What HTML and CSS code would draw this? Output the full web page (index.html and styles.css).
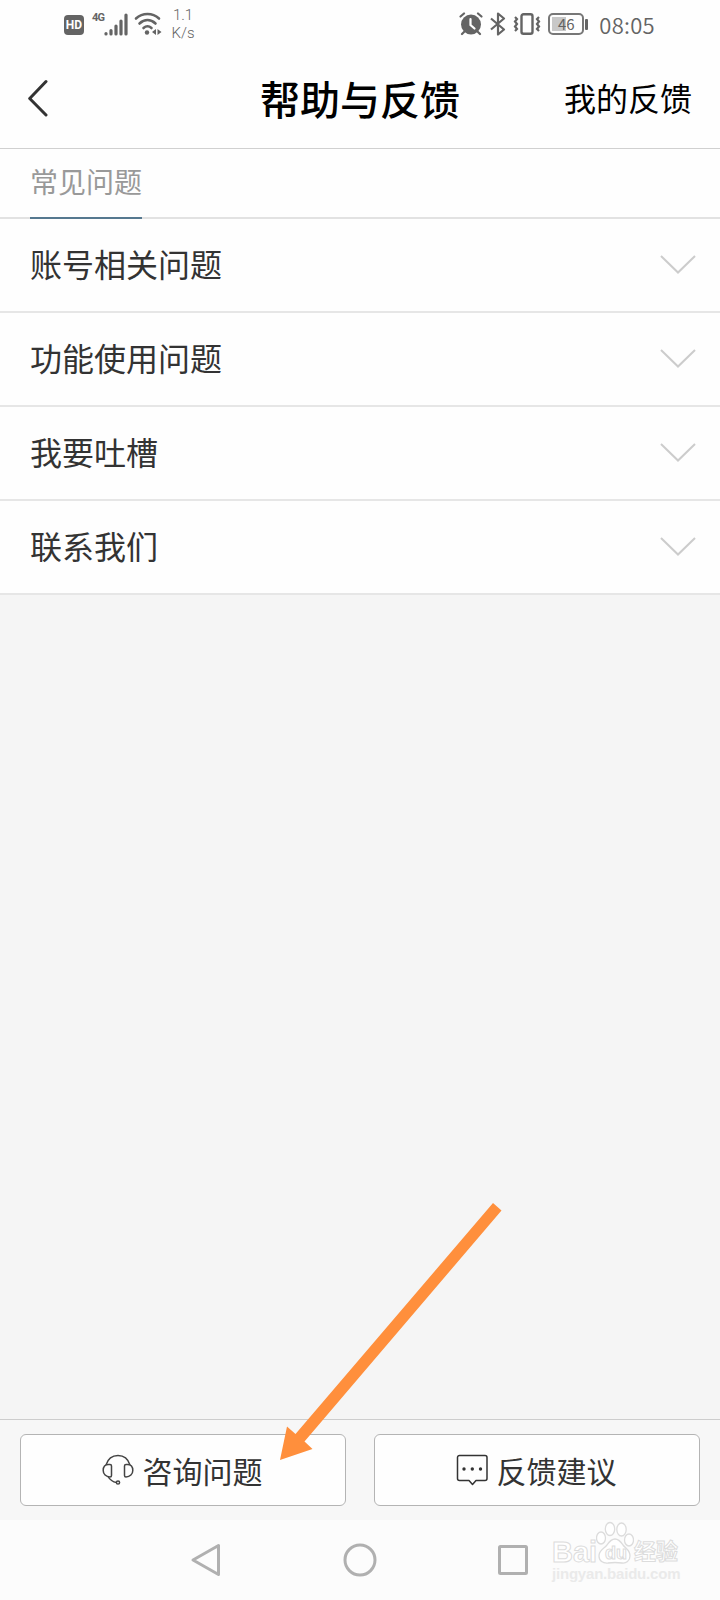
FILE: index.html
```html
<!DOCTYPE html>
<html lang="zh-CN">
<head>
  <meta charset="UTF-8">
  <title>帮助与反馈</title>
  <link rel="stylesheet" href="styles.css">
</head>
<body>
  <div class="status-bar">
    <div class="status-left">
      <span class="hd">HD</span>
      <span class="net">4G</span>
      <svg class="signal" width="24" height="24" viewBox="0 0 24 24" stroke="#646464" stroke-width="3.200" stroke-linecap="round">
        <path d="M2 20.5v.5M7 17.5v3.5M12 13v8M17 8v13M22 2v19"/>
      </svg>
      <svg class="wifi" width="28" height="24" viewBox="0 0 28 24" fill="none" stroke="#646464" stroke-width="2.6" stroke-linecap="round">
        <path d="M2 6.500C8.500 .5 18.500 .5 25 6.500M5.500 11.500c5-4.500 11-4.500 16 0M9.500 16c2.500-2.200 5.500-2.200 8 0"/>
        <circle cx="13" cy="20.500" r="2.200" fill="#646464" stroke="none"/>
        <path d="M22 17v6l-4-3zM23.500 17v6l4-3z" fill="#646464" stroke="none"/>
      </svg>
      <span class="speed">1.1<br>K/s</span>
    </div>
    <div class="status-right">
      <svg class="alarm" width="24" height="24" viewBox="0 0 24 24" fill="none" stroke="#646464" stroke-linecap="round">
        <circle cx="12" cy="12.500" r="10" fill="#646464" stroke="none"/>
        <path d="M1.500 4.500L5 1.500M22.500 4.500L19 1.500M5 20l-2 2M19 20l2 2" stroke-width="2.200"/>
        <path d="M11.500 7v6l4 3.500" stroke="#fff" stroke-width="2.200"/>
      </svg>
      <svg class="bluetooth" width="16" height="24" viewBox="0 0 16 24" fill="none" stroke="#646464" stroke-width="2.200" stroke-linejoin="round">
        <path d="M1 6.500l13 11-6 5v-21l6 5-13 11"/>
      </svg>
      <svg class="vibrate" width="28" height="24" viewBox="0 0 28 24" fill="none" stroke="#646464">
        <rect x="8.500" y="2.200" width="11" height="19.600" rx="2" stroke-width="2.400"/>
        <path d="M2 5l2 2-2 2.500 2 2.500-2 2.500 2 2.500-2 2M26 5l-2 2 2 2.500-2 2.500 2 2.500-2 2.500 2 2" stroke-width="2.200"/>
      </svg>
      <div class="battery"><span>46</span></div>
      <span class="time">08:05</span>
    </div>
  </div>

  <header class="header">
    <a class="back">
      <svg width="24" height="40" viewBox="0 0 24 40" fill="none" stroke="#333" stroke-width="3" stroke-linecap="round" stroke-linejoin="round">
        <path d="M18 3.500L1.700 20.500 18 37"/>
      </svg>
    </a>
    <h1>帮助与反馈</h1>
    <a class="my-feedback">我的反馈</a>
  </header>

  <nav class="tabs">
    <span class="tab">常见问题</span>
  </nav>

  <ul class="list">
    <li>
      <span>账号相关问题</span>
      <svg class="arrow" width="36" height="20" viewBox="0 0 36 20"><path d="M1 1l17 16.500L35 1"/></svg>
    </li>
    <li>
      <span>功能使用问题</span>
      <svg class="arrow" width="36" height="20" viewBox="0 0 36 20"><path d="M1 1l17 16.500L35 1"/></svg>
    </li>
    <li>
      <span>我要吐槽</span>
      <svg class="arrow" width="36" height="20" viewBox="0 0 36 20"><path d="M1 1l17 16.500L35 1"/></svg>
    </li>
    <li>
      <span>联系我们</span>
      <svg class="arrow" width="36" height="20" viewBox="0 0 36 20"><path d="M1 1l17 16.500L35 1"/></svg>
    </li>
  </ul>

  <div class="footer">
    <a class="btn">
      <svg width="32" height="32" viewBox="0 0 32 32" fill="none" stroke="#444" stroke-width="1.500">
        <path d="M4 11C6 4.500 10.500 1.500 16 1.500S26 4.500 28 11"/>
        <path d="M6.500 10.500H8a1.500 1.500 0 0 1 1.500 1.500v9.500c0 1-.5 1.500-1.500 1.500C4 23 1.200 20 1.200 16.500s2-6 5.300-6zM25.500 10.500H24a1.500 1.500 0 0 0-1.500 1.500v9.500c0 1 .5 1.500 1.500 1.500 4 0 6.800-3 6.800-6.500s-2-6-5.300-6z"/>
        <path d="M6 22.500c2 3.500 5 5.500 8.500 6"/>
        <circle cx="16" cy="28.500" r="1.600"/>
      </svg>
      <span>咨询问题</span>
    </a>
    <a class="btn">
      <svg width="32" height="32" viewBox="0 0 32 32" fill="none" stroke="#333" stroke-width="1.500">
        <path d="M3.500 1.500h25.500a2 2 0 0 1 2 2v21a2 2 0 0 1-2 2H20l-3.500 4-3.500-4H3.500a2 2 0 0 1-2-2v-21a2 2 0 0 1 2-2z" stroke-linejoin="round"/>
        <g fill="#333" stroke="none">
          <circle cx="8" cy="15" r="1.700"/>
          <circle cx="16.300" cy="15" r="1.700"/>
          <circle cx="24.500" cy="15" r="1.700"/>
        </g>
      </svg>
      <span>反馈建议</span>
    </a>
  </div>

  <div class="nav-bar">
    <svg width="32" height="34" viewBox="0 0 32 34"><path d="M28.500 2.500v29L3 17z"/></svg>
    <svg width="34" height="34" viewBox="0 0 34 34"><circle cx="17" cy="17" r="15"/></svg>
    <svg width="30" height="30" viewBox="0 0 30 30"><rect x="1.500" y="1.500" width="27" height="27" rx="1"/></svg>
  </div>

  <!-- arrow pointing at the first button -->
  <svg class="pointer" width="224" height="260" viewBox="0 0 224 260">
    <path d="M213 3L221.500 10.500 24.500 241.500 32.500 249 0 260 7 226.500 15.500 234z" fill="#ff8f3c"/>
  </svg>

  <div class="watermark">
    <div class="wm-top">
      <span class="wm-bai">Bai</span>
      <span class="wm-paw">
        <svg width="38" height="44" viewBox="0 0 38 44" fill="#fff" stroke="#dcdcdc" stroke-width="1.300">
          <ellipse cx="5" cy="17" rx="4.500" ry="6"/>
          <ellipse cx="14" cy="8" rx="4.700" ry="6.500"/>
          <ellipse cx="25.500" cy="8.500" rx="4.700" ry="6.500"/>
          <ellipse cx="33" cy="19" rx="4.500" ry="6"/>
          <path d="M19 18c4 0 6 3 8 6 3 4 7 5 7 11 0 5-4 7.500-8 7-5-.7-9-.7-14 0-5 .5-9-2-9-7 0-6 5-7 8-11 2-3 4-6 8-6z"/>
        </svg>
        <b>du</b>
      </span>
      <span class="wm-cn">经验</span>
    </div>
    <div class="wm-url">jingyan.baidu.com</div>
  </div>
</body>
</html>
```
FILE: styles.css
```css
* {
  box-sizing: border-box;
}

body {
  position: relative;
  display: flex;
  flex-direction: column;
  width: 720px;
  height: 1600px;
  margin: 0;
  overflow: hidden;
  background: #f5f5f5;
  color: #333;
  font-family: "Noto Sans CJK SC", sans-serif;
}

svg {
  display: block;
  flex: none;
}

/* status bar */
.status-bar {
  display: flex;
  justify-content: space-between;
  height: 48px;
  padding: 0 65px 0 64px;
  background: #fefefe;
  color: #646464;
}

.status-left,
.status-right {
  display: flex;
  align-items: center;
}

.hd {
  width: 20px;
  height: 20px;
  margin-top: 2px;
  border-radius: 4px;
  background: #646464;
  color: #fff;
  font: bold 12px/20px Roboto, sans-serif;
  text-align: center;
}

.net {
  width: 12px;
  margin: -13px 0 0 8px;
  font: bold 11px/12px "Roboto", sans-serif;
  letter-spacing: -0.8px;
}

.signal {
  margin-top: 1px;
}

.wifi {
  margin: 0 0 0 6px;
}

.speed {
  width: 24px;
  margin-left: 9px;
  font: 300 15px/18px Roboto, sans-serif;
  text-align: center;
  white-space: nowrap;
}

.bluetooth {
  margin-left: 7px;
}

.vibrate {
  margin-left: 7px;
}

.battery {
  position: relative;
  width: 36px;
  height: 22px;
  margin: 0 15px 0 7px;
  border: 2px solid #777;
  border-radius: 5px;
  background: linear-gradient(90deg, #c8c8c8 14px, #fefefe 14px) 2px 2px / 28px 14px no-repeat;
  font: 15px/18px "Noto Sans CJK SC", sans-serif;
  text-align: center;
}

.battery::after {
  content: "";
  position: absolute;
  top: 4px;
  right: -6px;
  width: 3px;
  height: 11px;
  border-radius: 1px;
  background: #646464;
}

.time {
  font-size: 22px;
  font-weight: 350;
  letter-spacing: 0.3px;
  line-height: 46px;
}

/* header */
.header {
  display: grid;
  grid-template-columns: 1fr auto 1fr;
  align-items: center;
  height: 101px;
  padding: 0 28px;
  border-bottom: 1px solid #d0d0d0;
  background: #fefefe;
  color: #000;
}

.header h1 {
  margin: 0;
  font: 500 40px/60px KaiTi, STKaiti, "Noto Sans CJK SC", sans-serif;
}

.my-feedback {
  justify-self: end;
  padding-bottom: 2px;
  font: 32px/48px KaiTi, STKaiti, "Noto Sans CJK SC", sans-serif;
}

/* tabs */
.tabs {
  display: flex;
  height: 70px;
  padding: 0 30px;
  background: linear-gradient(#fefefe 68px, #e2e2e2 68px);
}

.tab {
  height: 70px;
  border-bottom: 2px solid #55788f;
  color: #999;
  font-size: 28px;
  line-height: 65px;
}

/* question list */
.list {
  margin: 0;
  padding: 0;
  list-style: none;
}

.list li {
  display: flex;
  align-items: center;
  justify-content: space-between;
  height: 94px;
  padding: 0 24px 0 30px;
  border-bottom: 2px solid #e6e6e6;
  background: #fefefe;
  font-size: 32px;
  line-height: 48px;
}

.list span {
  padding-bottom: 4px;
}

.arrow {
  fill: none;
  stroke: #ccc;
  stroke-width: 2;
}

/* footer buttons */
.footer {
  display: flex;
  gap: 28px;
  height: 101px;
  margin-top: auto;
  padding: 14px 20px;
  border-top: 1px solid #cdcdcd;
  background: #f7f7f7;
}

.btn {
  display: flex;
  flex: 1;
  align-items: center;
  justify-content: center;
  gap: 9px;
  height: 72px;
  padding-right: 2px;
  border: 1px solid #b4b4b4;
  border-radius: 6px;
  background: #fefefe;
  font: 30px/44px KaiTi, STKaiti, "Noto Sans CJK SC", sans-serif;
}

.btn span {
  padding-bottom: 1px;
}

/* system navigation */
.nav-bar {
  display: flex;
  align-items: center;
  gap: 121px;
  height: 80px;
  padding-left: 190px;
  background: #fcfcfc;
}

.nav-bar svg {
  fill: none;
  stroke: #b0b0b0;
  stroke-width: 3;
  stroke-linejoin: round;
}

.pointer {
  position: absolute;
  left: 280px;
  top: 1200px;
}

/* watermark */
.watermark {
  position: absolute;
  left: 552px;
  top: 1521px;
  width: 130px;
  color: #fff;
  -webkit-text-stroke: 1px #dcdcdc;
}

.wm-top {
  display: flex;
  align-items: flex-end;
  height: 44px;
}

.wm-bai {
  width: 44px;
  margin-bottom: -4px;
  font: bold 29px/34px "Liberation Sans", sans-serif;
}

.wm-paw {
  position: relative;
}

.wm-paw b {
  position: absolute;
  left: 9px;
  bottom: 1px;
  font: bold 18px/22px "Liberation Sans", sans-serif;
}

.wm-cn {
  font-size: 22px;
  font-weight: bold;
  line-height: 32px;
}

.wm-url {
  font: bold 15px/18px "Liberation Sans", sans-serif;
  letter-spacing: -0.2px;
  -webkit-text-stroke: 0;
  color: #eaeaea;
}
```
